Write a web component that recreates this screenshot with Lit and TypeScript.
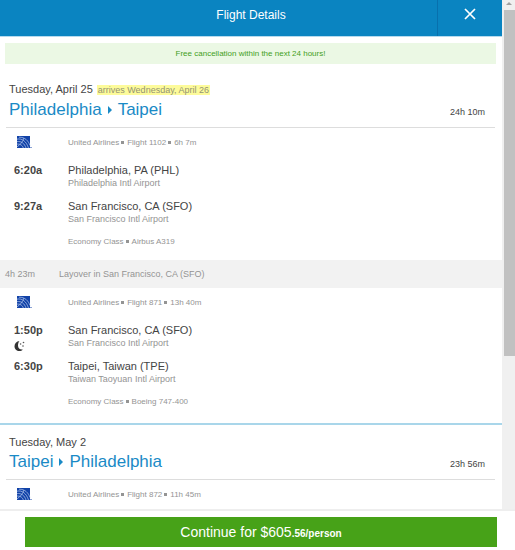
import { LitElement, html, css, svg, nothing } from "lit";
import { customElement, property } from "lit/decorators.js";

interface Stop {
  time: string;
  city: string;
  airport: string;
}

interface Leg {
  flight: string;
  duration: string;
  stops: Stop[];
  overnight?: boolean;
  plane?: string;
  layover?: { time: string; place: string };
}

interface Trip {
  date: string;
  arrives?: string;
  from: string;
  to: string;
  duration: string;
  legs: Leg[];
}

const sfo = { city: "San Francisco, CA (SFO)", airport: "San Francisco Intl Airport" };

const trips: Trip[] = [
  {
    date: "Tuesday, April 25",
    arrives: "arrives Wednesday, April 26",
    from: "Philadelphia",
    to: "Taipei",
    duration: "24h 10m",
    legs: [
      {
        flight: "Flight 1102",
        duration: "6h 7m",
        stops: [
          { time: "6:20a", city: "Philadelphia, PA (PHL)", airport: "Philadelphia Intl Airport" },
          { time: "9:27a", ...sfo },
        ],
        plane: "Airbus A319",
        layover: { time: "4h 23m", place: "Layover in San Francisco, CA (SFO)" },
      },
      {
        flight: "Flight 871",
        duration: "13h 40m",
        overnight: true,
        stops: [
          { time: "1:50p", ...sfo },
          { time: "6:30p", city: "Taipei, Taiwan (TPE)", airport: "Taiwan Taoyuan Intl Airport" },
        ],
        plane: "Boeing 747-400",
      },
    ],
  },
  {
    date: "Tuesday, May 2",
    from: "Taipei",
    to: "Philadelphia",
    duration: "23h 56m",
    legs: [{ flight: "Flight 872", duration: "11h 45m", stops: [] }],
  },
];

const globe = svg`
  <rect width="13" height="12" fill="#1243a8"></rect>
  <g fill="none" stroke="#b4c8ee" stroke-width="0.700">
    <path d="M0 3.200C5 2 9.500 5.500 11.500 12"></path>
    <path d="M0 5.600C4.500 5 7.500 7.500 9 12"></path>
    <path d="M0 8C3.500 7.800 5.500 9.500 6.400 12"></path>
    <path d="M2 1.200C8 1 11.500 5 13 9.500"></path>
    <path d="M0 10.800C3 9 6 5.500 7 2"></path>
  </g>
  <rect x="13.500" y="11" width="1" height="1" fill="#1243a8"></rect>`;

const dot = html`<i class="dot"></i>`;

@customElement("flight-leg")
export class FlightLeg extends LitElement {
  @property({ attribute: false }) leg!: Leg;

  static styles = css`
    :host {
      display: block;
      color: #949494;
    }
    .carrier,
    .stop {
      display: grid;
      grid-template-columns: 68px 1fr;
    }
    .carrier {
      height: 28px;
      align-items: center;
      font-size: 8px;
    }
    .logo {
      display: block;
      width: 15px;
      height: 12px;
      margin-left: 17px;
    }
    .dot {
      display: inline-block;
      width: 3px;
      height: 3px;
      margin: 0 3px 1px 2px;
      background: currentColor;
      vertical-align: baseline;
    }
    .stops {
      display: grid;
      gap: 10px;
      padding-top: 7px;
    }
    .time {
      padding-left: 14px;
      font-size: 11px;
      font-weight: bold;
      line-height: 14px;
      color: #444;
    }
    .moon {
      display: block;
      width: 12px;
      height: 12px;
      margin-top: 3px;
      margin-bottom: -3px;
    }
    .city {
      font-size: 11px;
      line-height: 14px;
      color: #444;
    }
    .airport {
      font-size: 9px;
      line-height: 12px;
    }
    .cabin {
      padding: 11px 0 12px 68px;
      font-size: 8px;
      line-height: 12px;
    }
    .layover {
      display: grid;
      grid-template-columns: 54px 1fr;
      padding-left: 5px;
      background: #f2f2f2;
      font-size: 9px;
      line-height: 28px;
    }
  `;

  render() {
    const { flight, duration, stops, overnight, plane, layover } = this.leg;
    return html`
      <div class="carrier">
        <svg class="logo" viewBox="0 0 15 12" role="img" aria-label="United">${globe}</svg>
        <span>United Airlines${dot}${flight}${dot}${duration}</span>
      </div>
      ${stops.length
        ? html`<div class="stops">
            ${stops.map(
              (s, i) => html`<div class="stop">
                <div class="time">
                  ${s.time}
                  ${overnight && i === 0
                    ? html`<svg class="moon" viewBox="0 0 12 12" role="img" aria-label="Overnight">
                        <path d="M5.500 1C2.500 1.400 0.500 3.600 0.500 6.200C0.500 9 2.700 11 5.300 11C6.800 11 8 10.500 8.800 9.500C6 9.900 4 8.200 4 5.500C4 3.600 4.500 2 5.500 1Z" fill="#333"></path>
                        <circle cx="6.600" cy="4" r="0.800" fill="#555"></circle>
                        <circle cx="9.500" cy="2.500" r="0.800" fill="#555"></circle>
                        <circle cx="9" cy="6" r="0.800" fill="#555"></circle>
                      </svg>`
                    : nothing}
                </div>
                <div>
                  <div class="city">${s.city}</div>
                  <div class="airport">${s.airport}</div>
                </div>
              </div>`
            )}
          </div>`
        : nothing}
      ${plane ? html`<div class="cabin">Economy Class${dot}${plane}</div>` : nothing}
      ${layover
        ? html`<div class="layover"><span>${layover.time}</span><span>${layover.place}</span></div>`
        : nothing}
    `;
  }
}

@customElement("app-root")
export class AppRoot extends LitElement {
  static styles = css`
    :host {
      display: flex;
      flex-direction: column;
      height: 100vh;
      overflow: hidden;
      background: #fff;
      font-family: "Liberation Sans", Arial, sans-serif;
      color: #444;
    }
    .body {
      flex: 1;
      min-height: 0;
      display: flex;
      border-bottom: 2px solid #eee;
    }
    .content {
      flex: 1;
      min-width: 0;
      overflow: hidden;
    }
    .header {
      display: grid;
      grid-template-columns: 65px 1fr 65px;
      height: 36px;
      background: #0a84c1;
      border-bottom: 1px solid #b5daee;
      color: #fff;
    }
    .heading {
      grid-column: 2;
      margin: 0;
      font-size: 12px;
      font-weight: normal;
      line-height: 31px;
      text-align: center;
    }
    .close {
      display: flex;
      justify-content: center;
      padding: 8px 0 0;
      border: 0;
      border-left: 1px solid #0870ad;
      background: none;
      color: inherit;
    }
    .cross {
      width: 12px;
      height: 12px;
    }
    .notice {
      margin: 6px 6px 8px 5px;
      background: #ebf8e4;
      color: #43a01c;
      font-size: 8px;
      line-height: 21px;
      text-align: center;
    }
    .trip {
      padding-top: 10px;
    }
    .trip + .trip {
      margin-top: 3px;
      border-top: 2px solid #a9d6ea;
    }
    .summary {
      display: flex;
      justify-content: space-between;
      align-items: flex-end;
      margin: 0 7px 0 6px;
      padding: 0 10px 5px 3px;
      border-bottom: 1px solid #ddd;
    }
    .date {
      font-size: 11px;
      line-height: 15px;
    }
    .arrives {
      margin-left: 4px;
      padding: 0 1px;
      background: #fdfb9a;
      color: #949474;
      font-size: 9px;
    }
    .route {
      display: flex;
      align-items: center;
      gap: 6px;
      margin: 0;
      font-size: 17px;
      font-weight: normal;
      line-height: 24px;
      color: #1a8ac6;
    }
    .arrow {
      width: 4px;
      height: 8px;
      fill: currentColor;
    }
    .total {
      font-size: 9px;
      line-height: 20px;
    }
    .scrollbar {
      width: 12px;
      padding-left: 1px;
      background: #f0f0f0;
    }
    .up {
      display: block;
      width: 12px;
      height: 10px;
    }
    .thumb {
      height: 346px;
      margin-left: 1px;
      background: #c1c1c1;
    }
    .footer {
      padding: 6px 18px 3px 25px;
    }
    .continue {
      display: block;
      width: 100%;
      height: 30px;
      padding: 0;
      border: 0;
      background: #47a218;
      color: #fff;
      font-family: inherit;
      font-size: 14px;
    }
    .cents {
      font-size: 10px;
      font-weight: bold;
    }
  `;

  render() {
    return html`
      <div class="body">
        <div class="content">
          <header class="header">
            <h1 class="heading">Flight Details</h1>
            <button class="close" aria-label="Close">
              <svg class="cross" viewBox="0 0 12 12" stroke="currentColor" stroke-width="1.700">
                <path d="M1 1L11 11M11 1L1 11"></path>
              </svg>
            </button>
          </header>
          <div class="notice">Free cancellation within the next 24 hours!</div>
          ${trips.map(
            (t) => html`<section class="trip">
              <div class="summary">
                <div>
                  <div class="date">
                    ${t.date}${t.arrives ? html`<span class="arrives">${t.arrives}</span>` : nothing}
                  </div>
                  <h2 class="route">
                    <span>${t.from}</span>
                    <svg class="arrow" viewBox="0 0 4 8"><path d="M0 0L4 4L0 8Z"></path></svg>
                    <span>${t.to}</span>
                  </h2>
                </div>
                <div class="total">${t.duration}</div>
              </div>
              ${t.legs.map((l) => html`<flight-leg .leg=${l}></flight-leg>`)}
            </section>`
          )}
        </div>
        <div class="scrollbar" aria-hidden="true">
          <svg class="up" viewBox="0 0 12 10"><path d="M3 5L6 2L9 5Z" fill="#a0a0a0"></path></svg>
          <div class="thumb"></div>
        </div>
      </div>
      <footer class="footer">
        <button class="continue">Continue for $605<span class="cents">.56/person</span></button>
      </footer>
    `;
  }
}
